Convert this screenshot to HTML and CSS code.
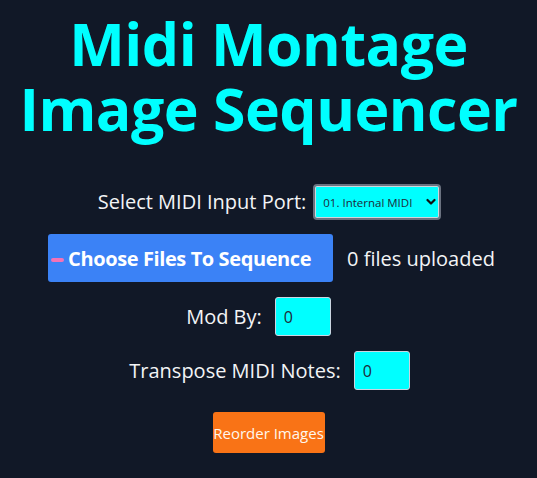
FILE: index.html
```html
<!DOCTYPE html>
<html lang="en">
<head>
<meta charset="utf-8">
<title>Midi Montage Image Sequencer</title>
<link rel="stylesheet" href="styles.css">
</head>
<body>
<main class="app">
  <h1 class="title">Midi Montage<br>Image Sequencer</h1>

  <div class="row row-port">
    <label class="label" for="port">Select MIDI Input Port:</label>
    <div class="select-wrap">
      <select id="port" class="select">
        <option>01. Internal MIDI</option>
      </select>
      <svg class="chevron" width="10" height="8" viewBox="0 0 10 8" aria-hidden="true">
        <path d="M1.5 2 L5 5.5 L8.5 2" fill="none" stroke="#111" stroke-width="2.2" stroke-linecap="round" stroke-linejoin="round"/>
      </svg>
    </div>
  </div>

  <div class="row row-files">
    <label class="file-btn" for="files">
      <span class="file-dash"></span>
      <span>Choose Files To Sequence</span>
    </label>
    <input id="files" class="file-input" type="file" multiple>
    <span class="file-count">0 files uploaded</span>
  </div>

  <div class="row row-mod">
    <label class="label" for="mod">Mod By:</label>
    <input id="mod" class="num" type="text" value="0">
  </div>

  <div class="row row-transpose">
    <label class="label" for="transpose">Transpose MIDI Notes:</label>
    <input id="transpose" class="num" type="text" value="0">
  </div>

  <button class="reorder" type="button">Reorder Images</button>
</main>
</body>
</html>
```

FILE: styles.css
```css
* {
  box-sizing: border-box;
}

html, body {
  margin: 0;
  height: 100%;
}

body {
  background: #111827;
  color: #f3f4f6;
  font-family: "Open Sans", "Noto Sans", sans-serif;
}

.app {
  display: flex;
  flex-direction: column;
  align-items: center;
  padding-top: 11px;
}

.title {
  margin: 0 0 43px;
  color: #00ffff;
  font-size: 59px;
  line-height: 65px;
  font-weight: 700;
  text-align: center;
  letter-spacing: -0.5px;
}

.row {
  display: flex;
  align-items: center;
}

.label {
  font-size: 20px;
  line-height: 28px;
}

/* port selector */
.row-port {
  gap: 7px;
  padding-left: 2px;
}

.select-wrap {
  position: relative;
  display: flex;
}

.select {
  appearance: none;
  -webkit-appearance: none;
  width: 128px;
  height: 36px;
  padding: 0 22px 0 8px;
  background: #00ffff;
  color: #1f2937;
  border: 2px solid #6b7280;
  border-radius: 4px;
  box-shadow: inset 0 0 0 1px #d1d5db;
  font-family: inherit;
  font-size: 11.5px;
}

.chevron {
  position: absolute;
  right: 5px;
  top: 14px;
  pointer-events: none;
}

/* file chooser */
.row-files {
  margin-top: 14px;
  gap: 14px;
  padding-left: 6px;
}

.file-btn {
  display: flex;
  align-items: center;
  gap: 4px;
  width: 285px;
  height: 48px;
  padding-left: 3px;
  background: #3b82f6;
  border-radius: 3px;
  color: #ffffff;
  font-size: 20px;
  font-weight: 700;
  letter-spacing: -0.4px;
  cursor: pointer;
}

.file-dash {
  width: 13px;
  height: 4px;
  margin-top: 3px;
  border-radius: 2px;
  background: #f472b6;
}

.file-input {
  display: none;
}

.file-count {
  font-size: 20px;
}

/* number fields */
.num {
  width: 56px;
  height: 39px;
  padding: 0 8px;
  background: #00ffff;
  color: #1f2937;
  border: 1px solid #cbd5e1;
  border-radius: 3px;
  font-family: inherit;
  font-size: 16px;
}

.row-mod {
  margin-top: 15px;
  gap: 13px;
  padding-right: 20px;
}

.row-transpose {
  margin-top: 15px;
  gap: 13px;
  padding-left: 2px;
}

.reorder {
  margin-top: 22px;
  width: 112px;
  height: 41px;
  padding: 0;
  background: #f97316;
  color: #fff7ed;
  border: none;
  border-radius: 3px;
  font-family: inherit;
  font-size: 15px;
  cursor: pointer;
}
```
